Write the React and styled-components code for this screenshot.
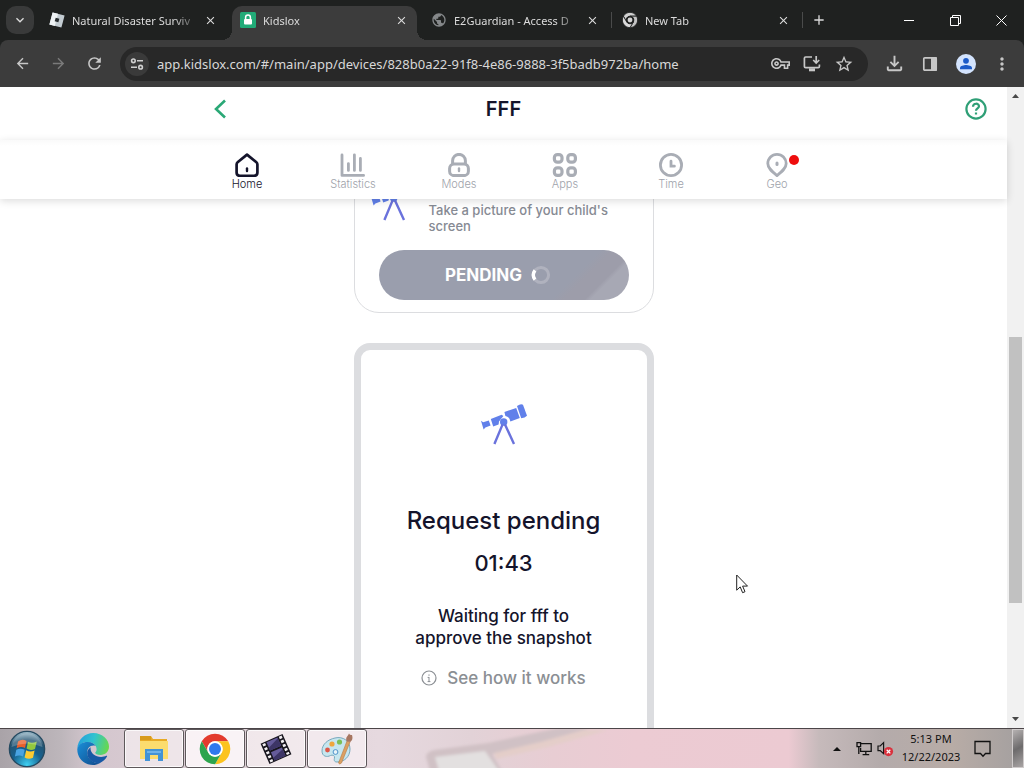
import React from "react";
import styled, { createGlobalStyle, css } from "styled-components";
import {
  MdArrowBack,
  MdArrowForward,
  MdRefresh,
  MdOutlineVpnKey,
  MdStarBorder,
  MdOutlineFileDownload,
  MdMoreVert,
  MdKeyboardArrowDown,
  MdClose,
  MdAdd,
  MdPublic,
} from "react-icons/md";

const ui = '"Noto Sans", "Open Sans", sans-serif';
const brand = "Inter, Roboto, sans-serif";

const GlobalStyle = createGlobalStyle`
  *, *::before, *::after { box-sizing: border-box; }
  body { margin: 0; background: #fff; overflow: hidden; }
  button, input { font: inherit; color: inherit; border: 0; background: none; padding: 0; margin: 0; }
  a { color: inherit; text-decoration: none; }
  h1, h2, p { margin: 0; }
  svg { display: block; flex: none; }
`;

const Desktop = styled.div`
  height: 100vh;
  display: flex;
  flex-direction: column;
  font-family: ${ui};
`;

/* ---------- browser chrome ---------- */

const TabStrip = styled.header`
  display: flex;
  align-items: flex-end;
  height: 40px;
  flex: none;
  padding-left: 6px;
  background: #1f2120;
  color: #dcdcdc;
`;

const TabSearch = styled.button`
  display: grid;
  place-items: center;
  width: 28px;
  height: 28px;
  margin: 0 7px 6px 0;
  border-radius: 10px;
  background: #393a3a;
  flex: none;
`;

const Tabs = styled.nav`
  display: flex;
  flex: 0 1 764px;
  min-width: 0;
`;

const Tab = styled.div`
  position: relative;
  display: flex;
  align-items: center;
  flex: 1 1 0;
  min-width: 0;
  height: 34px;
  margin-right: 6px;
  padding: 0 8px 6px;
  gap: 7px;
  font-size: 11px;
  border-radius: 10px 10px 0 0;
  ${(p) =>
    p.$divider &&
    css`
      &::after {
        content: "";
        position: absolute;
        right: -4px;
        top: 6px;
        width: 1px;
        height: 16px;
        background: #4a4b4b;
      }
    `}
  ${(p) =>
    p.$active &&
    css`
      background: #3c3c3c;
      &::before,
      &::after {
        content: "";
        position: absolute;
        bottom: 0;
        width: 10px;
        height: 10px;
      }
      &::before {
        left: -10px;
        background: radial-gradient(circle at 0 0, transparent 10px, #3c3c3c 10px);
      }
      &::after {
        right: -10px;
        background: radial-gradient(circle at 100% 0, transparent 10px, #3c3c3c 10px);
      }
    `}
`;

const TabLabel = styled.span`
  flex: 1;
  min-width: 0;
  white-space: nowrap;
  mask-image: linear-gradient(to right, #000 calc(100% - 22px), rgba(0, 0, 0, 0.2));
`;

const TabClose = styled.button`
  display: grid;
  place-items: center;
  width: 16px;
  height: 16px;
  flex: none;
`;

const NewTab = styled.button`
  display: grid;
  place-items: center;
  width: 28px;
  height: 28px;
  margin-bottom: 6px;
  flex: none;
`;

const WindowButtons = styled.div`
  display: flex;
  margin-left: auto;
  height: 40px;
`;

const WindowButton = styled.button`
  display: grid;
  place-items: center;
  width: 46px;
  color: #fff;
`;

const ToolbarBack = styled.div`
  background: #1f2120;
  flex: none;
`;

const Toolbar = styled.div`
  display: flex;
  align-items: center;
  gap: 8px;
  height: 47px;
  padding: 0 4px;
  border-radius: 8px 8px 0 0;
  background: #3c3c3c;
  color: #c7c7c7;
`;

const ToolGroup = styled.div`
  display: flex;
  flex: none;
`;

const ToolButton = styled.button`
  display: grid;
  place-items: center;
  width: 36px;
  height: 34px;
  opacity: ${(p) => (p.$dim ? 0.45 : 1)};
`;

const AddressBar = styled.form`
  display: flex;
  align-items: center;
  flex: 1;
  min-width: 0;
  height: 34px;
  padding: 0 8px 0 5px;
  border-radius: 17px;
  background: #282828;
`;

const SiteInfo = styled.button`
  display: grid;
  place-items: center;
  width: 24px;
  height: 24px;
  border-radius: 12px;
  background: #3a3a3a;
  flex: none;
`;

const AddressInput = styled.input`
  flex: 1;
  min-width: 0;
  margin-left: 8px;
  font-size: 13px;
  color: #d8d8d8;
  outline: 0;
`;

const AddressButton = styled.button`
  display: grid;
  place-items: center;
  width: 32px;
  height: 32px;
  flex: none;
`;

/* ---------- page ---------- */

const Viewport = styled.div`
  display: flex;
  flex: 1;
  min-height: 0;
  background: #fff;
`;

const Page = styled.div`
  display: flex;
  flex-direction: column;
  flex: 1;
  min-width: 0;
  font-family: ${brand};
  color: #14142b;
`;

const PageHeader = styled.header`
  display: grid;
  grid-template-columns: 1fr auto 1fr;
  align-items: center;
  flex: none;
  height: 53px;
  padding: 0 20px 9px;
`;

const BackCell = styled.div`
  padding-left: 40%;
`;

const BackLink = styled.a`
  display: block;
  color: #2aa876;
`;

const PageTitle = styled.h1`
  font-size: 20px;
  line-height: 24px;
  font-weight: 600;
`;

const HelpLink = styled.a`
  justify-self: end;
  color: #2f9f76;
`;

const SectionNav = styled.nav`
  position: relative;
  z-index: 1;
  display: flex;
  justify-content: center;
  flex: none;
  height: 59px;
  padding: 13px 0 0 17px;
  background: linear-gradient(#fafafa, #fff 6px);
  box-shadow: 0 2px 8px rgba(0, 0, 0, 0.14);
`;

const SectionLink = styled.a`
  display: flex;
  flex-direction: column;
  align-items: center;
  width: 106px;
  font-size: 11px;
  line-height: 14px;
  font-weight: 300;
  color: ${(p) => (p.$active ? "#14142b" : "#9ea2aa")};
`;

const IconSlot = styled.span`
  position: relative;
  color: ${(p) => (p.$active ? "#14142b" : "#a9adb5")};
`;

const Alert = styled.span`
  position: absolute;
  top: 2px;
  right: -10px;
  width: 10px;
  height: 10px;
  border-radius: 5px;
  background: #ee0d0d;
`;

const ScrollArea = styled.main`
  display: flex;
  flex-direction: column;
  align-items: center;
  flex: 1;
  min-height: 0;
  overflow: hidden;
`;

const SnapshotCard = styled.section`
  width: 300px;
  flex: none;
  margin: -24px 0 30px;
  padding: 4px 16px 12px;
  border: 1px solid #dcdde0;
  border-radius: 25px;
`;

const SnapshotRow = styled.div`
  display: flex;
  align-items: flex-start;
  gap: 12px;
  min-height: 54px;
`;

const SnapshotText = styled.p`
  align-self: flex-end;
  max-width: 190px;
  font-size: 13px;
  line-height: 16px;
  font-weight: 500;
  color: #868a93;
`;

const PendingButton = styled.button`
  display: flex;
  align-items: center;
  justify-content: center;
  gap: 8px;
  width: 250px;
  height: 50px;
  margin: 16px 8px 0;
  padding-right: 10px;
  border-radius: 25px;
  background: linear-gradient(135deg, #9a9ead 0 74%, #9d9daa 78% 85%, #a7a8b4 87%);
  color: #fff;
  font-size: 17px;
  font-weight: 700;
`;

const RequestCard = styled.section`
  display: flex;
  flex-direction: column;
  align-items: center;
  width: 300px;
  flex: none;
  padding: 54px 24px 60px;
  border: 7px solid #dcdde0;
  border-radius: 16px;
  text-align: center;
`;

const RequestTitle = styled.h2`
  margin-top: 61px;
  font-size: 24px;
  line-height: 30px;
  font-weight: 500;
  white-space: nowrap;
`;

const Countdown = styled.p`
  margin-top: 12px;
  font-size: 22px;
  line-height: 30px;
  font-weight: 500;
`;

const WaitingText = styled.p`
  margin-top: 27px;
  font-size: 17px;
  line-height: 22px;
  font-weight: 500;
  white-space: nowrap;
`;

const HowLink = styled.a`
  display: flex;
  align-items: center;
  gap: 10px;
  margin-top: 18px;
  font-size: 17px;
  line-height: 22px;
  font-weight: 500;
  color: #8b8f94;
`;

const Scrollbar = styled.div`
  display: flex;
  flex-direction: column;
  width: 17px;
  flex: none;
  padding: 0 2px;
  background: #f1f1f1;
`;

const ScrollArrow = styled.button`
  display: grid;
  place-items: center;
  height: 18px;
`;

const ScrollGap = styled.div`
  flex: ${(p) => p.$size};
`;

const ScrollThumb = styled.div`
  flex: ${(p) => p.$size};
  background: #c1c1c1;
`;

/* ---------- taskbar ---------- */

const Taskbar = styled.footer`
  display: flex;
  align-items: center;
  height: 40px;
  flex: none;
  border-top: 1px solid #4b4548;
  background: linear-gradient(
    90deg,
    #a9a3a8 0%,
    #bdb6bb 6%,
    #d4c6ce 9%,
    #ddd0d6 22%,
    #e6d9df 37%,
    #e2d2d7 46%,
    #e8cdd3 54%,
    #eccbd3 62%,
    #eccad2 77%,
    #c6babb 80%,
    #b4abab 86%,
    #b8aca6 93%,
    #a39f9f 100%
  );
`;

const Launchers = styled.div`
  display: flex;
  gap: 12px;
  margin-right: 4px;
`;

const Launcher = styled.button`
  display: grid;
  place-items: center;
  width: 54px;
  height: 39px;
`;

const TaskButton = styled.button`
  display: grid;
  place-items: center;
  width: 60px;
  height: 39px;
  margin-right: 1px;
  border: 1px solid #5e585b;
  border-radius: 3px;
  background: rgba(255, 250, 252, ${(p) => (p.$active ? 0.82 : 0.55)});
  box-shadow: inset 0 0 0 1px rgba(255, 255, 255, 0.75);
`;

const Wallpaper = styled.div`
  flex: 1;
  min-width: 0;
  height: 39px;
  overflow: hidden;
`;

const Tray = styled.div`
  display: flex;
  align-items: center;
  height: 39px;
  gap: 5px;
  color: #111;
`;

const TrayButton = styled.button`
  display: grid;
  place-items: center;
  min-width: ${(p) => (p.$wide ? "28px" : "0")};
`;

const Clock = styled.button`
  width: 64px;
  padding-bottom: 2px;
  font-size: 11px;
  line-height: 18px;
  text-align: center;
`;

const ShowDesktop = styled.button`
  width: 12px;
  height: 39px;
  margin-left: 16px;
  border: 1px solid #d0cccc;
  background: linear-gradient(150deg, #b5b1b1, #6d6b6c 50%, #a8a4a4);
`;

const Pointer = styled.svg`
  position: fixed;
  left: 736px;
  top: 574px;
  z-index: 5;
`;

/* ---------- drawings ---------- */

const RobloxIcon = () => (
  <svg width="16" height="16" viewBox="0 0 16 16">
    <path d="M3.6.4 15.6 3.5 12.4 15.6.4 12.4z" fill="#c3ccd2" />
    <path d="M3.6.4 9 1.8 5.8 14 .4 12.4z" fill="#eef2f4" />
    <path d="M6.7 5.7 10.3 6.7 9.4 10.3 5.7 9.3z" fill="#252a2d" />
  </svg>
);

const LockFavicon = () => (
  <svg width="16" height="16" viewBox="0 0 16 16">
    <rect width="16" height="16" rx="1.5" fill="#22ab78" />
    <rect x="4" y="7" width="8" height="5.6" rx="1" fill="#fff" />
    <path d="M5.6 7.2V5.4a2.4 2.4 0 0 1 4.8 0v1.8" fill="none" stroke="#fff" strokeWidth="1.5" />
  </svg>
);

const ChromeMark = ({ size, mono }) => {
  const [a, b, c, core] = mono
    ? ["#d0d0d0", "#c4c4c4", "#dadada", "#d4d4d4"]
    : ["#e33b2e", "#fcc31e", "#2da44e", "#2f79ee"];
  const gap = mono ? "#1f2120" : "none";
  return (
    <svg width={size} height={size} viewBox="1 1 46 46">
      <g stroke={gap} strokeWidth="2.5">
        <path d="M24 13H43.05A22 22 0 0 0 4.95 13L14.47 29.5A11 11 0 0 1 24 13Z" fill={a} />
        <path d="M43.05 13H24A11 11 0 0 1 33.53 29.5L24 46A22 22 0 0 0 43.05 13Z" fill={b} />
        <path d="M4.95 13 14.47 29.5A11 11 0 0 0 33.53 29.5L24 46A22 22 0 0 1 4.95 13Z" fill={c} />
      </g>
      <circle cx="24" cy="24" r="11" fill={mono ? "#1f2120" : "#fff"} />
      <circle cx="24" cy="24" r={mono ? 7 : 8.6} fill={core} />
    </svg>
  );
};

const TuneIcon = () => (
  <svg width="14" height="14" viewBox="0 0 14 14" fill="none" stroke="#d0d0d0" strokeWidth="1.6">
    <circle cx="3.4" cy="3.8" r="1.8" />
    <path d="M7 3.8h6M1 10.2h6" />
    <circle cx="10.6" cy="10.2" r="1.8" />
  </svg>
);

const InstallIcon = () => (
  <svg width="18" height="18" viewBox="0 0 18 18" fill="none" stroke="currentColor" strokeWidth="1.7">
    <path d="M9 2H2.6Q1.4 2 1.4 3.2V11.4Q1.4 12.6 2.6 12.6H15.2Q16.4 12.6 16.4 11.4V9.4" />
    <path d="M13.2 1v6.6M10.2 5l3 3 3-3" />
    <path d="M6 14.8h6" strokeWidth="3" />
  </svg>
);

const PanelIcon = () => (
  <svg width="16" height="16" viewBox="0 0 16 16">
    <rect x="1.8" y="1.8" width="12.4" height="12.4" rx="1" fill="none" stroke="currentColor" strokeWidth="1.7" />
    <path d="M9 1h5q1 0 1 1v12q0 1-1 1H9z" fill="currentColor" />
  </svg>
);

const ProfileIcon = () => (
  <svg width="20" height="20" viewBox="0 0 20 20">
    <circle cx="10" cy="10" r="10" fill="#d3e3fd" />
    <circle cx="10" cy="6.8" r="2.9" fill="#1b5ac8" />
    <path d="M4 15.2v-1.4C4 11.8 8 10.9 10 10.9s6 .9 6 2.9v1.4z" fill="#1b5ac8" />
  </svg>
);

const HomeIcon = () => (
  <svg width="24" height="24" viewBox="0 0 24 24" fill="none" stroke="currentColor" strokeLinejoin="round" strokeLinecap="round">
    <path d="M12 1.6 21.4 9.2Q22.4 10 22.4 11.4V19.4Q22.4 22.800 19 22.8H5Q1.6 22.8 1.6 19.4V11.4Q1.6 10 2.6 9.2Z" strokeWidth="2.7" />
    <path d="M12 15.4v2.6" strokeWidth="2.4" />
  </svg>
);

const StatsIcon = () => (
  <svg width="26" height="24" viewBox="0 0 26 24" fill="none" stroke="currentColor" strokeWidth="2.8" strokeLinecap="round" strokeLinejoin="round">
    <path d="M2 2v20.4h21.6" />
    <path d="M8.4 10.6v6.8M14.4 1.8v15.6M20.4 5.4v12" />
  </svg>
);

const ModesIcon = () => (
  <svg width="24" height="24" viewBox="0 0 24 24" fill="none" stroke="currentColor">
    <path d="M5.600 11V7.800a6.400 6.400 0 0 1 12.800 0V11" strokeWidth="3" />
    <rect x="2.600" y="11" width="18.800" height="11.600" rx="4.400" strokeWidth="3" />
    <path d="M12 15.400v2.600" strokeWidth="2.400" strokeLinecap="round" />
  </svg>
);

const AppsIcon = () => (
  <svg width="26" height="24" viewBox="0 0 26 24" fill="none" stroke="currentColor" strokeWidth="3.2">
    <rect x="2.4" y="1.6" width="7.6" height="7.6" rx="3" />
    <rect x="15.8" y="1.6" width="7.6" height="7.6" rx="3" />
    <rect x="2.4" y="14.8" width="7.6" height="7.6" rx="3" />
    <rect x="15.8" y="14.8" width="7.6" height="7.6" rx="3" />
  </svg>
);

const TimeIcon = () => (
  <svg width="24" height="24" viewBox="0 0 24 24" fill="none" stroke="currentColor" strokeWidth="2.8" strokeLinecap="round">
    <circle cx="12" cy="12" r="10.6" />
    <path d="M12 8.200v5h3.400" />
  </svg>
);

const GeoIcon = () => (
  <svg width="24" height="24" viewBox="0 0 24 24" fill="none" stroke="currentColor" strokeLinejoin="round">
    <path d="M12 22.6C7 18.6 2.8 15.2 2.8 10.6a9.2 9.2 0 0 1 18.4 0C21.2 15.2 17 18.6 12 22.6Z" strokeWidth="2.8" />
    <path d="M12 10v1.6" strokeWidth="3" strokeLinecap="round" />
  </svg>
);

const Telescope = () => (
  <svg width="46" height="41" viewBox="0 0 46 41">
    <g fill="#6180ea">
      <path d="M0 16.800 2.200 18.300 7.800 16.400 9.600 21.400 4.400 23.500 2.600 25.500Z" />
      <path d="M9.800 15 20.600 10.700 22.400 12 18 17.400 17.600 20.400 12.200 22.400Z" />
      <path d="M23.400 8 35.200 3.900 38.800 13.900 29.400 17.400Q28.400 12.600 24.400 12Z" />
      <path d="M36 2Q40-.9 42 .8L46 11.800Q44 14.200 40.200 14.200Z" />
      <circle cx="22.700" cy="18" r="3.700" />
    </g>
    <path d="M21.600 20.400 13.400 40M24 20.400 33 40" stroke="#6a72dc" strokeWidth="2.400" fill="none" />
  </svg>
);

const Spinner = () => (
  <svg width="22" height="22" viewBox="0 0 22 22" fill="none">
    <circle cx="11" cy="11" r="7.600" stroke="#b0b2be" strokeWidth="3" />
    <path d="M5 6.400A7.600 7.600 0 0 0 5 15.600" stroke="#fff" strokeWidth="3.400" />
  </svg>
);

const StartOrb = () => (
  <svg width="38" height="38" viewBox="0 0 38 38">
    <defs>
      <radialGradient id="orb" cx="50%" cy="95%" r="95%">
        <stop offset="0" stopColor="#3fd0f2" />
        <stop offset=".45" stopColor="#16618f" />
        <stop offset=".75" stopColor="#245472" />
        <stop offset="1" stopColor="#a8c5d3" />
      </radialGradient>
    </defs>
    <circle cx="19" cy="19" r="17.6" fill="url(#orb)" stroke="#254a61" strokeWidth="1.4" />
    <path d="M10 11.5Q14 8.5 18.5 11L17 18Q13 16 8.6 18.2Z" fill="#e8602c" />
    <path d="M20 11.8Q24 14 28.8 11.6L27 19Q22.5 21 18.6 18.6Z" fill="#93c83e" />
    <path d="M8.3 19.7Q12.5 17.6 16.7 19.7L15 26.4Q11 24.5 6.9 26.6Z" fill="#49a3e2" />
    <path d="M18.2 20.2Q22 22.5 26.6 20.5L25 27.8Q20.5 30 16.6 27.4Z" fill="#fccb32" />
    <path d="M3.5 17A15.6 15.6 0 0 1 34.5 17Q19 10 3.5 17Z" fill="#fff" opacity=".22" />
  </svg>
);

const EdgeLogo = () => (
  <svg width="32" height="32" viewBox="0 0 32 32">
    <defs>
      <linearGradient id="edgeTop" x1="0" y1=".3" x2="1" y2=".5">
        <stop offset="0" stopColor="#249fdc" />
        <stop offset=".5" stopColor="#32c3cf" />
        <stop offset="1" stopColor="#67d84e" />
      </linearGradient>
      <linearGradient id="edgeLow" x1="0" y1="0" x2="1" y2="1">
        <stop offset="0" stopColor="#1a8fd8" />
        <stop offset="1" stopColor="#114a8c" />
      </linearGradient>
    </defs>
    <path d="M.3 16C.5 6.5 8 0 16.2 0 25.5 0 32 6.5 32 13.6 32 19 28 22 23.6 22c-3.6 0-5.400-1.300-5.400-2.200 0-.7 1.400-1.200 1.400-3.600C19.6 12 15.5 9 11 9 5 9 1.2 12.5.3 16Z" fill="url(#edgeTop)" />
    <path d="M.3 16C1.2 11.6 5.400 9 10.800 9c4 0 6.600 1.800 8 4-5.200-1.600-8.600 2-8.600 6.400 0 6.600 6.400 11 12.400 10.800C20.700 31.400 18.400 32 16 32 7 32 0 25 .3 16Z" fill="url(#edgeLow)" />
    <path d="M13.700 14.200C11 16 10 18 10.200 20.600c.4 6.200 6.600 10.400 12.400 9.600 3.400-1.600 6-4 7.400-6.600.4-.8-.2-1.200-.8-.8-1.200.6-3 1.100-5.100 1.100-5.700 0-10.600-3.900-10.600-8.100Z" fill="#1759a5" />
  </svg>
);

const FolderIcon = () => (
  <svg width="30" height="28" viewBox="0 0 30 28">
    <path d="M1 1h11l2 3h14v20H1z" fill="#e8aa25" />
    <path d="M1 6h28v18H1z" fill="#fcdc6e" />
    <path d="M1 1h11v4H1z" fill="#d89a1c" />
    <path d="M6 14h18v12h-5v-6h-8v6H6z" fill="#4393d6" />
    <path d="M8 16h14v2H8z" fill="#6eb3ea" />
  </svg>
);

const FilmIcon = () => (
  <svg width="32" height="30" viewBox="0 0 32 30">
    <g transform="rotate(-24 16 15)">
      <rect x="4" y="4" width="24" height="22" fill="#17151d" />
      <path d="M10 5h12v9H10zM10 16h12v9H10z" fill="#655b9a" />
      <path d="M10 11l12-5v8H10zM10 22l12-4v7H10z" fill="#3d3566" />
      <path d="M7 5v20M25 5v20" stroke="#f3f0f3" strokeWidth="3" strokeDasharray="2.6 1.8" />
    </g>
  </svg>
);

const PaintIcon = () => (
  <svg width="32" height="32" viewBox="0 0 32 32">
    <path d="M14 5C22 3 29 8 29 16c0 8-6 13-13 13-3 0-3-2-2.500-4 .5-2.500-2-3.500-4-2.500C6 24.500 1 23.500 1 18 1 11 7 6.500 14 5Z" fill="#c6e6ef" stroke="#78a9bd" />
    <circle cx="6.500" cy="17" r="2.400" fill="#dd5748" />
    <circle cx="11" cy="11" r="2.600" fill="#efa63c" />
    <circle cx="18.500" cy="9" r="2.600" fill="#7bc057" />
    <circle cx="14.500" cy="19" r="2.400" fill="#e9f4f8" stroke="#4e92cb" />
    <path d="M17.500 30 26 8l3 1L20.500 30q-2 2-3 0Z" fill="#dca062" stroke="#b57b43" strokeWidth=".6" />
    <path d="M25.600 8C24 4 27 3.500 28 .5q1 2 3 1.500Q32.500 7 29.300 9Z" fill="#a77762" />
  </svg>
);

const Artwork = () => (
  <svg width="460" height="39" viewBox="0 0 460 39">
    <defs>
      <filter id="soft" x="-5%" y="-20%" width="110%" height="140%">
        <feGaussianBlur stdDeviation="1.5" />
      </filter>
    </defs>
    <g filter="url(#soft)">
      <path d="M62 42 58 28Q58 23 66 21L120 14 190 -1H222L172 14 124 25 134 42Z" fill="#d0c1c5" />
      <path d="M126 24 172 13 216 1H240L180 18 128 30Z" fill="#e4cec9" />
      <path d="M67 28 117 22 131 42H71Z" fill="#e3e0e0" />
    </g>
  </svg>
);

const NetworkIcon = () => (
  <svg width="16" height="15" viewBox="0 0 16 15" fill="none" stroke="currentColor" strokeWidth="1.3">
    <path d="M4.600 2.600h10.600v7.800H4.600V7M9.800 10.400v3M6.600 13.600h6.600" />
    <path d="M1 1.600h3.600v4H1zM2.800 5.600v7.400" />
  </svg>
);

const VolumeIcon = () => (
  <svg width="17" height="16" viewBox="0 0 17 16">
    <path d="M1 5h2.200L6.600 1.600v11L3.200 9.600H1z" fill="none" stroke="#151515" strokeWidth="1.2" />
    <circle cx="11.5" cy="10.6" r="4.6" fill="#d9303c" />
    <path d="m9.700 8.800 3.600 3.600m0-3.600-3.600 3.600" stroke="#fff" strokeWidth="1.3" />
  </svg>
);

const NoticeIcon = () => (
  <svg width="17" height="18" viewBox="0 0 17 18" fill="none" stroke="currentColor" strokeWidth="1.3">
    <path d="M1 1.500h15v12h-4.500L9 16.200 6.500 13.500H1z" />
  </svg>
);

/* ---------- composition ---------- */

const tabs = [
  { title: "Natural Disaster Surviv", icon: <RobloxIcon /> },
  { title: "Kidslox", icon: <LockFavicon />, active: true },
  { title: "E2Guardian - Access D", icon: <MdPublic size={16} color="#85888a" />, divider: true },
  { title: "New Tab", icon: <ChromeMark size={16} mono />, divider: true },
];

const sections = [
  { name: "Home", icon: <HomeIcon />, active: true },
  { name: "Statistics", icon: <StatsIcon /> },
  { name: "Modes", icon: <ModesIcon /> },
  { name: "Apps", icon: <AppsIcon /> },
  { name: "Time", icon: <TimeIcon /> },
  { name: "Geo", icon: <GeoIcon />, alert: true },
];

const tasks = [
  { name: "File Explorer", icon: <FolderIcon /> },
  { name: "Chrome", icon: <ChromeMark size={32} />, active: true },
  { name: "Movie Maker", icon: <FilmIcon /> },
  { name: "Paint", icon: <PaintIcon /> },
];

export default function App() {
  return (
    <Desktop>
      <GlobalStyle />
      <TabStrip>
        <TabSearch aria-label="Search tabs"><MdKeyboardArrowDown size={16} /></TabSearch>
        <Tabs>
          {tabs.map((t) => (
            <Tab key={t.title} $active={t.active} $divider={t.divider}>
              {t.icon}
              <TabLabel>{t.title}</TabLabel>
              <TabClose aria-label={"Close " + t.title}><MdClose size={13} /></TabClose>
            </Tab>
          ))}
        </Tabs>
        <NewTab aria-label="New tab"><MdAdd size={16} /></NewTab>
        <WindowButtons>
          <WindowButton aria-label="Minimize">
            <svg width="10" height="10"><path d="M0 5.500h10" stroke="currentColor" /></svg>
          </WindowButton>
          <WindowButton aria-label="Restore">
            <svg width="11" height="11" fill="none" stroke="currentColor"><path d="M.5 2.500h8v8h-8zM2.500 2.500v-2h8v8h-2" /></svg>
          </WindowButton>
          <WindowButton aria-label="Close window">
            <svg width="11" height="11" stroke="currentColor"><path d="m.5.5 10 10m0-10-10 10" /></svg>
          </WindowButton>
        </WindowButtons>
      </TabStrip>

      <ToolbarBack>
        <Toolbar>
          <ToolGroup>
            <ToolButton aria-label="Back"><MdArrowBack size={17} /></ToolButton>
            <ToolButton aria-label="Forward" $dim><MdArrowForward size={17} /></ToolButton>
            <ToolButton aria-label="Reload"><MdRefresh size={19} /></ToolButton>
          </ToolGroup>
          <AddressBar>
            <SiteInfo type="button" aria-label="Site information"><TuneIcon /></SiteInfo>
            <AddressInput
              aria-label="Address"
              defaultValue="app.kidslox.com/#/main/app/devices/828b0a22-91f8-4e86-9888-3f5badb972ba/home"
            />
            <AddressButton type="button" aria-label="Passwords"><MdOutlineVpnKey size={19} /></AddressButton>
            <AddressButton type="button" aria-label="Install app"><InstallIcon /></AddressButton>
            <AddressButton type="button" aria-label="Bookmark"><MdStarBorder size={20} /></AddressButton>
          </AddressBar>
          <ToolGroup>
            <ToolButton aria-label="Downloads"><MdOutlineFileDownload size={23} /></ToolButton>
            <ToolButton aria-label="Side panel"><PanelIcon /></ToolButton>
            <ToolButton aria-label="Profile"><ProfileIcon /></ToolButton>
            <ToolButton aria-label="Menu"><MdMoreVert size={20} /></ToolButton>
          </ToolGroup>
        </Toolbar>
      </ToolbarBack>

      <Viewport>
        <Page>
          <PageHeader>
            <BackCell>
              <BackLink href="#back" aria-label="Back to devices">
                <svg width="24" height="20" viewBox="0 0 24 20" fill="none" stroke="currentColor" strokeWidth="2.6">
                  <path d="M19 1.500 10 10l9 8.500" />
                </svg>
              </BackLink>
            </BackCell>
            <PageTitle>FFF</PageTitle>
            <HelpLink href="#help" aria-label="Help">
              <svg width="22" height="22" viewBox="0 0 22 22" fill="none" stroke="currentColor" strokeWidth="2.2">
                <circle cx="11" cy="11" r="9.600" />
                <path d="M8 8.800c0-4 6-4 6-.6 0 2.200-3 2.200-3 4.600M11 14.600v2" />
              </svg>
            </HelpLink>
          </PageHeader>
          <SectionNav>
            {sections.map((s) => (
              <SectionLink key={s.name} href={"#" + s.name} $active={s.active}>
                <IconSlot $active={s.active}>
                  {s.icon}
                  {s.alert && <Alert />}
                </IconSlot>
                {s.name}
              </SectionLink>
            ))}
          </SectionNav>
          <ScrollArea>
            <SnapshotCard>
              <SnapshotRow>
                <Telescope />
                <SnapshotText>Take a picture of your child's screen</SnapshotText>
              </SnapshotRow>
              <PendingButton>PENDING<Spinner /></PendingButton>
            </SnapshotCard>
            <RequestCard>
              <Telescope />
              <RequestTitle>Request pending</RequestTitle>
              <Countdown>01:43</Countdown>
              <WaitingText>Waiting for fff to<br />approve the snapshot</WaitingText>
              <HowLink href="#how">
                <svg width="16" height="16" viewBox="0 0 16 16" fill="none" stroke="currentColor">
                  <circle cx="8" cy="8" r="7" strokeWidth="1.2" />
                  <path d="M8 4.400v1.400M8 7v4.600M6.600 7.400H8M6.600 11.600h2.800" strokeWidth="1" />
                </svg>
                See how it works
              </HowLink>
            </RequestCard>
          </ScrollArea>
        </Page>
        <Scrollbar>
          <ScrollArrow aria-label="Scroll up">
            <svg width="7" height="4"><path d="M0 4 3.500 0 7 4z" fill="#484848" /></svg>
          </ScrollArrow>
          <ScrollGap $size={232} />
          <ScrollThumb $size={266} />
          <ScrollGap $size={107} />
          <ScrollArrow aria-label="Scroll down">
            <svg width="7" height="4"><path d="M0 0 3.500 4 7 0z" fill="#484848" /></svg>
          </ScrollArrow>
        </Scrollbar>
      </Viewport>

      <Taskbar>
        <Launchers>
          <Launcher aria-label="Start"><StartOrb /></Launcher>
          <Launcher aria-label="Edge"><EdgeLogo /></Launcher>
        </Launchers>
        {tasks.map((t) => (
          <TaskButton key={t.name} aria-label={t.name} $active={t.active}>{t.icon}</TaskButton>
        ))}
        <Wallpaper><Artwork /></Wallpaper>
        <Tray>
          <TrayButton aria-label="Hidden icons" $wide>
            <svg width="8" height="4"><path d="M0 4 4 0l4 4z" fill="#111" /></svg>
          </TrayButton>
          <TrayButton aria-label="Network"><NetworkIcon /></TrayButton>
          <TrayButton aria-label="Volume"><VolumeIcon /></TrayButton>
          <Clock>5:13 PM<br />12/22/2023</Clock>
          <TrayButton aria-label="Notifications" $wide><NoticeIcon /></TrayButton>
        </Tray>
        <ShowDesktop aria-label="Show desktop" />
      </Taskbar>

      <Pointer width="13" height="20" viewBox="0 0 13 20">
        <path d="M.7 1v15.200l3.500-3.300 2.400 5.800 2.400-1-2.400-5.600h4.900z" fill="#fff" stroke="#222" />
      </Pointer>
    </Desktop>
  );
}
